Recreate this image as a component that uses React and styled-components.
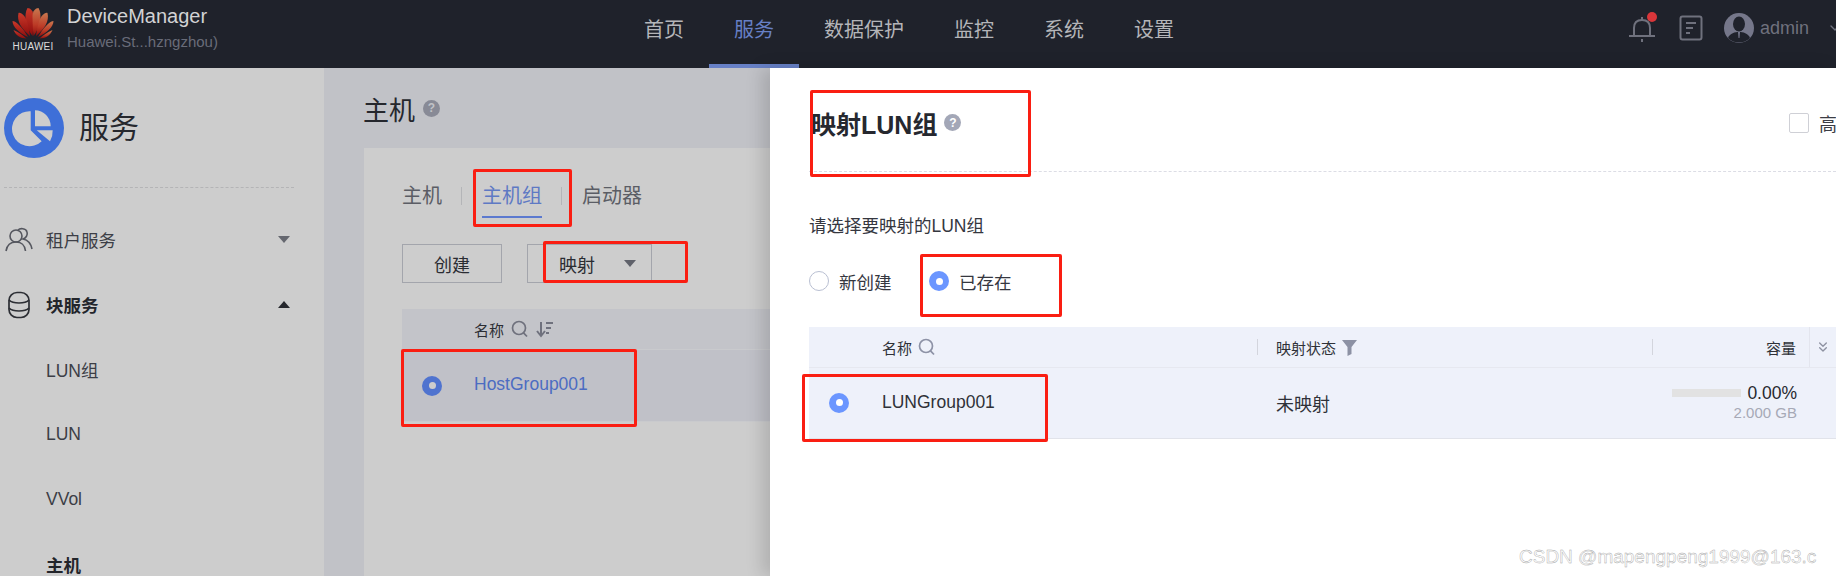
import React from "react";
import styled, { createGlobalStyle } from "styled-components";
import { ChevronDown, ChevronsDown } from "lucide-react";

const Global = createGlobalStyle`
  html, body { margin: 0; padding: 0; background: #fff; }
  body { font-family: "Liberation Sans", "Noto Sans CJK SC", sans-serif; overflow: hidden; }
  * { box-sizing: border-box; }
  svg { flex: none; display: block; }
`;

const Page = styled.div`
  position: relative;
  width: 1836px;
  height: 576px;
  overflow: hidden;
  display: flex;
  flex-direction: column;
`;

const Header = styled.header`
  height: 68px;
  flex: none;
  background: #1f222b;
  display: flex;
  align-items: stretch;
`;
const Brand = styled.div`
  width: 619px;
  flex: none;
  display: flex;
  padding: 7px 0 0 11px;
  gap: 12px;
`;
const LogoBox = styled.div`
  width: 44px;
  display: flex;
  flex-direction: column;
  align-items: center;
`;
const LogoWord = styled.span`
  font-size: 10px;
  line-height: 10px;
  margin-top: 3px;
  letter-spacing: 0.2px;
  color: #dcdcdc;
  white-space: nowrap;
`;
const BrandText = styled.div`
  display: flex;
  flex-direction: column;
  gap: 6px;
  margin-top: -1px;
`;
const AppName = styled.div`
  font-size: 20px;
  line-height: 20px;
  color: #d2d2d4;
`;
const AppSub = styled.div`
  font-size: 15px;
  line-height: 20px;
  color: #696c79;
`;
const Nav = styled.nav`
  display: flex;
  flex: 1;
`;
const NavItem = styled.div`
  padding: 0 25px;
  height: 68px;
  line-height: 60px;
  font-size: 20px;
  color: ${(p) => (p.$active ? "#6780c6" : "#b4b5b9")};
  border-bottom: 4px solid ${(p) => (p.$active ? "#6780c6" : "transparent")};
`;
const HeaderTools = styled.div`
  display: flex;
  align-items: center;
  padding-bottom: 12px;
  color: #6f717d;
  width: 208px;
  flex: none;
`;
const BellWrap = styled.div`
  position: relative;
  width: 28px;
  height: 28px;
  flex: none;
  margin-right: 23px;
`;
const RedDot = styled.span`
  position: absolute;
  right: -1px;
  top: -2px;
  width: 10px;
  height: 10px;
  border-radius: 50%;
  background: #d9363a;
`;
const DocWrap = styled.div`
  width: 24px;
  height: 26px;
  flex: none;
  margin-right: 21px;
`;
const UserName = styled.span`
  font-size: 18px;
  margin-left: 6px;
  color: #6f717d;
`;
const UserCaret = styled.span`
  display: flex;
  flex: none;
  margin-left: 18px;
`;

const Main = styled.div`
  flex: 1;
  display: flex;
  min-height: 0;
`;
const Sidebar = styled.aside`
  width: 324px;
  flex: none;
  background: #cdcdcd;
  padding: 30px 0 0 4px;
`;
const SideHead = styled.div`
  display: flex;
  align-items: center;
  gap: 15px;
  height: 60px;
`;
const SideTitle = styled.div`
  font-size: 30px;
  line-height: 62px;
  color: #26282e;
`;
const SideRule = styled.div`
  width: 290px;
  margin-top: 29px;
  border-top: 1px dashed #b4b4b6;
`;
const SideList = styled.div`
  margin-top: 19px;
`;
const SideRow = styled.div`
  width: 293px;
  height: 65px;
  display: flex;
  align-items: center;
  font-size: 17.5px;
  color: ${(p) => (p.$strong ? "#23252b" : "#3c3e46")};
  font-weight: ${(p) => (p.$strong ? 700 : 400)};
  padding-left: ${(p) => (p.$sub ? "42px" : "0")};
`;
const SideIcon = styled.span`
  width: 42px;
  display: flex;
  padding-left: ${(p) => p.$pad}px;
`;
const RowLabel = styled.span`
  flex: 1;
`;
const Triangle = styled.span`
  width: 0;
  height: 0;
  margin-right: 7px;
  border-left: 6px solid transparent;
  border-right: 6px solid transparent;
  ${(p) =>
    p.$up
      ? `border-bottom: 7px solid ${p.$color};`
      : `border-top: 7px solid ${p.$color};`}
`;

const Content = styled.main`
  flex: 1;
  background: #c1c2c7;
  padding: 0 0 0 40px;
  min-width: 0;
`;
const PageTitle = styled.div`
  height: 80px;
  display: flex;
  align-items: center;
  gap: 8px;
  margin-left: -1px;
  font-size: 26px;
  color: #25272d;
`;
const Help = styled.span`
  width: ${(p) => p.$size}px;
  height: ${(p) => p.$size}px;
  flex: none;
  border-radius: 50%;
  background: ${(p) => p.$bg};
  color: ${(p) => p.$fg};
  font-size: ${(p) => p.$size - 5}px;
  font-weight: 700;
  display: flex;
  align-items: center;
  justify-content: center;
`;
const Card = styled.section`
  background: #cdcdcd;
  height: 428px;
  padding: 28px 0 0 38px;
`;
const Tabs = styled.div`
  display: flex;
  align-items: center;
  height: 42px;
`;
const Tab = styled.div`
  font-size: 20px;
  line-height: 40px;
  height: 42px;
  color: ${(p) => (p.$active ? "#5e79c4" : "#5b5d65")};
  border-bottom: 2px solid ${(p) => (p.$active ? "#5b79cf" : "transparent")};
`;
const TabSep = styled.span`
  width: 1px;
  height: 18px;
  margin: 0 20px 2px 19px;
  background: #b4b5b8;
`;
const Actions = styled.div`
  display: flex;
  gap: 25px;
  margin-top: 26px;
`;
const Button = styled.div`
  height: 39px;
  width: ${(p) => p.$w}px;
  border: 1px solid #a3a5ac;
  font-size: 18px;
  color: #2a2c32;
  display: flex;
  align-items: center;
  justify-content: ${(p) => (p.$split ? "space-between" : "center")};
  padding: ${(p) => (p.$split ? "0 8px 0 31px" : "0")};
`;
const BgTable = styled.div`
  margin-top: 26px;
  background: #c3c4c9;
`;
const BgHead = styled.div`
  height: 41px;
  display: flex;
  align-items: center;
  padding-left: 72px;
  gap: 7px;
  font-size: 15px;
  color: #2c2e34;
  border-bottom: 1px solid #c9cacd;
`;
const BgRow = styled.div`
  height: 72px;
  display: flex;
  align-items: center;
  background: #c0c1c8;
  border-bottom: 1px solid #c9cacd;
`;
const RadioCell = styled.div`
  width: ${(p) => p.$w}px;
  flex: none;
  display: flex;
  justify-content: center;
`;
const Radio = styled.span`
  width: 20px;
  height: 20px;
  border-radius: 50%;
  flex: none;
  display: flex;
  align-items: center;
  justify-content: center;
  background: ${(p) => p.$color || "#fff"};
  border: ${(p) => (p.$color ? "none" : "1.5px solid #b9bfd2")};
  &::after {
    content: "";
    width: 7px;
    height: 7px;
    border-radius: 50%;
    background: ${(p) => (p.$color ? p.$dot : "transparent")};
  }
`;
const LinkText = styled.span`
  font-size: 17.5px;
  color: #4c6cc2;
  margin-left: 12px;
  margin-bottom: 3px;
`;

const Drawer = styled.div`
  position: absolute;
  left: 770px;
  right: 0;
  top: 68px;
  bottom: 0;
  background: #fff;
  box-shadow: -8px 0 16px rgba(0, 0, 0, 0.14);
  padding: 0 0 0 39px;
`;
const DrawerHead = styled.div`
  height: 104px;
  display: flex;
  align-items: center;
  gap: 7px;
  padding: 6px 0 0 2px;
  border-bottom: 1px dashed #dcdde5;
`;
const DrawerTitle = styled.h2`
  margin: 0;
  font-size: 25px;
  font-weight: 700;
  color: #26282f;
`;
const Advanced = styled.div`
  margin-left: auto;
  display: flex;
  align-items: center;
  gap: 10px;
  font-size: 18px;
  color: #3b3d45;
  width: 47px;
  flex: none;
  overflow: hidden;
  white-space: nowrap;
`;
const CheckBox = styled.span`
  width: 20px;
  height: 20px;
  flex: none;
  border: 1px solid #cfd0d6;
  border-radius: 2px;
`;
const Prompt = styled.div`
  margin-top: 39px;
  font-size: 17.5px;
  line-height: 30px;
  color: #35373f;
`;
const RadioGroup = styled.div`
  display: flex;
  align-items: center;
  margin-top: 25px;
  height: 30px;
`;
const RadioOption = styled.label`
  display: flex;
  align-items: center;
  gap: 10px;
  width: 120px;
  font-size: 17.5px;
  color: #35373f;
`;
const LunTable = styled.div`
  margin-top: 31px;
  background: #eef1fa;
  border-bottom: 1px solid #e1e3ea;
`;
const LunHead = styled.div`
  height: 41px;
  display: flex;
  align-items: center;
  font-size: 15px;
  color: #2f3138;
  border-bottom: 1px solid #e6e8f0;
`;
const LunRow = styled.div`
  height: 70px;
  padding-bottom: 1px;
  display: flex;
  align-items: center;
  font-size: 18px;
  color: #2f3138;
`;
const NameCol = styled.div`
  width: ${(p) => p.$w}px;
  flex: none;
  display: flex;
  align-items: center;
  gap: 6px;
  height: 100%;
  padding-left: ${(p) => p.$pad || 0}px;
`;
const RowName = styled.span`
  font-size: 17.5px;
`;
const HeadSep = styled.span`
  width: 1px;
  height: 16px;
  flex: none;
  background: #d3d5dd;
  margin-right: 18px;
`;
const CapHead = styled.div`
  width: 125px;
  flex: none;
  text-align: right;
`;
const MoreCol = styled.div`
  margin-left: 13px;
  width: 60px;
  flex: none;
  height: 100%;
  border-left: 1px solid #e3e5ee;
  display: flex;
  align-items: center;
  padding-left: 5px;
  color: #8d91a1;
`;
const CapCell = styled.div`
  width: 125px;
  flex: none;
  display: flex;
  flex-direction: column;
  align-items: flex-end;
`;
const CapTop = styled.div`
  display: flex;
  align-items: center;
  gap: 6px;
  font-size: 17.5px;
  line-height: 20px;
  color: #26282f;
`;
const CapBar = styled.span`
  width: 69px;
  height: 8px;
  background: #e2e2e2;
`;
const CapSub = styled.div`
  font-size: 15px;
  line-height: 20px;
  color: #a6a9b6;
`;

const Annot = styled.div.attrs((p) => ({
  style: { left: p.$x, top: p.$y, width: p.$w, height: p.$h },
}))`
  position: absolute;
  border: 3px solid #fa1e12;
  border-radius: 2px;
  pointer-events: none;
`;
const Watermark = styled.div`
  position: absolute;
  left: 1519px;
  top: 546px;
  font-size: 19px;
  line-height: 22px;
  color: #fff;
  -webkit-text-stroke: 0.4px #a4a4a4;
  white-space: nowrap;
`;

const Petals = () => (
  <>
    <path d="M21 29C14 20 12 8 16 1C19 1 22 4 22 9C22 16 21.5 24 21 29Z" />
    <path d="M18.5 29C10 22 5 14 7 6C9 5 13 8 15 13C17 19 18 25 18.5 29Z" />
    <path d="M16.5 30C8 26 1 20 1 14C4 14 9 19 12 23C14 26 15.5 28 16.5 30Z" />
    <path d="M15 31.5C9 31.5 4 28 2 23C7 25 11 28 15 31.5Z" />
  </>
);
const HuaweiLogo = () => (
  <svg width="44" height="32" viewBox="0 0 43 32">
    <defs>
      <linearGradient id="hw" x1="0" y1="0" x2="0" y2="1">
        <stop offset="0" stopColor="#c9392a" />
        <stop offset="1" stopColor="#8e0c0c" />
      </linearGradient>
      <linearGradient id="hw2" x1="0" y1="0" x2="0" y2="1">
        <stop offset="0" stopColor="#c9784f" />
        <stop offset="0.6" stopColor="#bc3a26" />
        <stop offset="1" stopColor="#8e0c0c" />
      </linearGradient>
    </defs>
    <g fill="url(#hw)">
      <Petals />
    </g>
    <g fill="url(#hw2)" transform="translate(43 0) scale(-1 1)">
      <Petals />
    </g>
  </svg>
);
const Pie = () => (
  <svg width="60" height="60" viewBox="0 0 60 60">
    <circle cx="30" cy="30" r="30" fill="#3e6fd8" />
    <path d="M26.7 13.300A17.500 17.500 0 1 0 37.700 43.300L26.700 32.300Z" fill="#cdcdcd" />
    <path d="M31 12.300A16 16 0 0 1 46.700 28.300L31 28.300Z" fill="#cdcdcd" />
    <path d="M32.700 32.300L48.700 32.300A20 20 0 0 1 46 43.300Z" fill="#cdcdcd" />
  </svg>
);
const Bell = () => (
  <svg width="28" height="28" viewBox="0 0 28 28" fill="none" stroke="#6f717d" strokeWidth="2">
    <path d="M1 22H27M6 22V14C6 9 9 6 14 6C19 6 22 9 22 14V22" />
    <path d="M14 3V6M14 25V28" />
  </svg>
);
const Doc = () => (
  <svg width="24" height="26" viewBox="0 0 24 26" fill="none" stroke="#6f717d" strokeWidth="2">
    <rect x="1.500" y="1.500" width="21" height="23" rx="2" />
    <path d="M7 8H17M7 13H14M7 18H11" />
  </svg>
);
const Avatar = () => (
  <svg width="30" height="30" viewBox="0 0 30 30">
    <circle cx="15" cy="15" r="15" fill="#75778a" />
    <ellipse cx="15" cy="11" rx="6" ry="7.500" fill="#1f222b" />
    <path d="M4 25C6 20 11 19 15 19C19 19 24 20 26 25C23 28 19 29.500 15 29.500C11 29.500 7 28 4 25Z" fill="#1f222b" />
    <path d="M14 19L16 19L15.500 25L14.500 25Z" fill="#75778a" />
  </svg>
);
const People = () => (
  <svg width="28" height="26" viewBox="0 0 28 26" fill="none" stroke="#55575f" strokeWidth="1.600">
    <circle cx="11" cy="9" r="6" />
    <path d="M1 24C2 18 6 15 11 15C16 15 20 18 20.500 24" />
    <path d="M13 3C15 1 21 1 22 5C23 8 21 11 18 12C23 13 26 17 27 22" />
  </svg>
);
const Database = () => (
  <svg width="22" height="28" viewBox="0 0 22 28" fill="none" stroke="#2c2e34" strokeWidth="1.700">
    <rect x="1" y="1.500" width="20" height="25" rx="8" />
    <path d="M1 9C5 13 17 13 21 9M1 17C5 21 17 21 21 17" />
  </svg>
);
const Search = ({ color }) => (
  <svg width="18" height="18" viewBox="0 0 18 18" fill="none" stroke={color} strokeWidth="1.700">
    <circle cx="8" cy="8" r="6.500" />
    <path d="M12.500 12.800L16 16.500" />
  </svg>
);
const Sort = () => (
  <svg width="18" height="18" viewBox="0 0 18 18" fill="none" stroke="#6f717d" strokeWidth="2">
    <path d="M5 2V15M1 11L5 16L9 11" />
    <path d="M10 3H17M10 8H15M10 13H13" />
  </svg>
);
const Funnel = () => (
  <svg width="15" height="17" viewBox="0 0 15 17">
    <path d="M0 1H15L9.500 8V15L5.500 17V8Z" fill="#8c91a4" />
  </svg>
);

export default function App() {
  return (
    <Page>
      <Global />
      <Header>
        <Brand>
          <LogoBox>
            <HuaweiLogo />
            <LogoWord>HUAWEI</LogoWord>
          </LogoBox>
          <BrandText>
            <AppName>DeviceManager</AppName>
            <AppSub>Huawei.St...hzngzhou)</AppSub>
          </BrandText>
        </Brand>
        <Nav>
          <NavItem>首页</NavItem>
          <NavItem $active>服务</NavItem>
          <NavItem>数据保护</NavItem>
          <NavItem>监控</NavItem>
          <NavItem>系统</NavItem>
          <NavItem>设置</NavItem>
        </Nav>
        <HeaderTools>
          <BellWrap>
            <Bell />
            <RedDot />
          </BellWrap>
          <DocWrap>
            <Doc />
          </DocWrap>
          <Avatar />
          <UserName>admin</UserName>
          <UserCaret>
            <ChevronDown size={16} />
          </UserCaret>
        </HeaderTools>
      </Header>
      <Main>
        <Sidebar>
          <SideHead>
            <Pie />
            <SideTitle>服务</SideTitle>
          </SideHead>
          <SideRule />
          <SideList>
            <SideRow>
              <SideIcon $pad={1}><People /></SideIcon>
              <RowLabel>租户服务</RowLabel>
              <Triangle $color="#65676f" />
            </SideRow>
            <SideRow $strong>
              <SideIcon $pad={4}><Database /></SideIcon>
              <RowLabel>块服务</RowLabel>
              <Triangle $up $color="#25272d" />
            </SideRow>
            <SideRow $sub>LUN组</SideRow>
            <SideRow $sub>LUN</SideRow>
            <SideRow $sub>VVol</SideRow>
            <SideRow $sub $strong>主机</SideRow>
          </SideList>
        </Sidebar>
        <Content>
          <PageTitle>
            主机
            <Help $size={17} $bg="#888a96" $fg="#c1c2c7">?</Help>
          </PageTitle>
          <Card>
            <Tabs>
              <Tab>主机</Tab>
              <TabSep />
              <Tab $active>主机组</Tab>
              <TabSep />
              <Tab>启动器</Tab>
            </Tabs>
            <Actions>
              <Button $w={100}>创建</Button>
              <Button $w={125} $split>
                映射
                <Triangle $color="#5f616a" />
              </Button>
            </Actions>
            <BgTable>
              <BgHead>
                名称
                <Search color="#6f717d" />
                <Sort />
              </BgHead>
              <BgRow>
                <RadioCell $w={60}>
                  <Radio $color="#4f73cf" $dot="#cdcdcd" />
                </RadioCell>
                <LinkText>HostGroup001</LinkText>
              </BgRow>
            </BgTable>
          </Card>
        </Content>
      </Main>
      <Drawer>
        <DrawerHead>
          <DrawerTitle>映射LUN组</DrawerTitle>
          <Help $size={17} $bg="#a3a7b7" $fg="#fff">?</Help>
          <Advanced>
            <CheckBox />
            高级
          </Advanced>
        </DrawerHead>
        <Prompt>请选择要映射的LUN组</Prompt>
        <RadioGroup>
          <RadioOption>
            <Radio />
            新创建
          </RadioOption>
          <RadioOption>
            <Radio $color="#6b96ff" $dot="#fff" />
            已存在
          </RadioOption>
        </RadioGroup>
        <LunTable>
          <LunHead>
            <NameCol $w={73} />
            <NameCol $w={375}>
              名称
              <Search color="#8d92a6" />
            </NameCol>
            <HeadSep />
            <NameCol $w={376}>
              映射状态
              <Funnel />
            </NameCol>
            <HeadSep />
            <CapHead>容量</CapHead>
            <MoreCol><ChevronsDown size={16} /></MoreCol>
          </LunHead>
          <LunRow>
            <RadioCell $w={60}>
              <Radio $color="#6b96ff" $dot="#fff" />
            </RadioCell>
            <NameCol $w={407} $pad={13}>
              <RowName>LUNGroup001</RowName>
            </NameCol>
            <NameCol $w={396}>未映射</NameCol>
            <CapCell>
              <CapTop>
                <CapBar />
                0.00%
              </CapTop>
              <CapSub>2.000 GB</CapSub>
            </CapCell>
          </LunRow>
        </LunTable>
      </Drawer>

      <Annot $x={473} $y={169} $w={99} $h={58} />
      <Annot $x={543} $y={241} $w={145} $h={42} />
      <Annot $x={401} $y={349} $w={236} $h={78} />
      <Annot $x={810} $y={90} $w={221} $h={87} />
      <Annot $x={920} $y={254} $w={142} $h={63} />
      <Annot $x={802} $y={374} $w={246} $h={68} />
      <Watermark>CSDN @mapengpeng1999@163.c</Watermark>
    </Page>
  );
}
